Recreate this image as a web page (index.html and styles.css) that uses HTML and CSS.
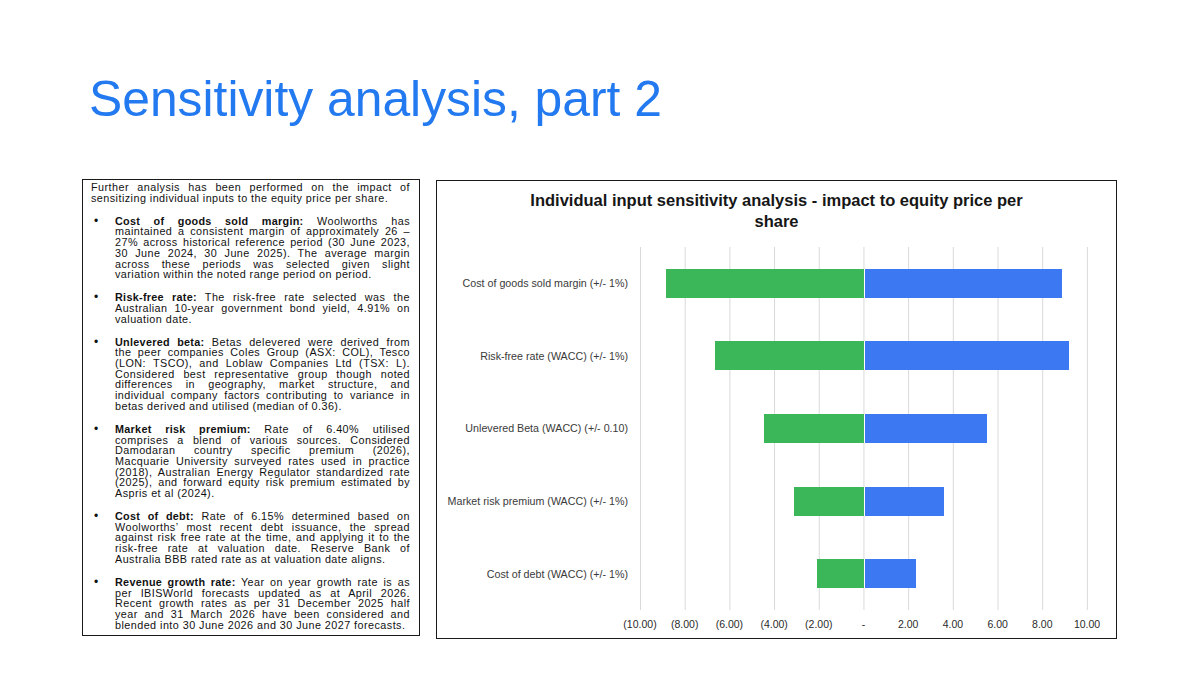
FILE: index.html
```html
<!DOCTYPE html>
<html lang="en">
<head>
<meta charset="utf-8">
<title>Sensitivity analysis, part 2</title>
<link rel="stylesheet" href="styles.css">
</head>
<body>
<div class="slide">
  <h1 class="title">Sensitivity analysis, part 2</h1>
  <div class="content">
    <div class="notes">
      <p class="para">
        <span class="ln j">Further analysis has been performed on the impact of</span>
        <span class="ln">sensitizing individual inputs to the equity price per share.</span>
      </p>
      <div class="item">
        <span class="dot">•</span>
        <p class="body">
          <span class="ln j"><b>Cost of goods sold margin:</b> Woolworths has</span>
          <span class="ln j">maintained a consistent margin of approximately 26 –</span>
          <span class="ln j">27% across historical reference period (30 June 2023,</span>
          <span class="ln j">30 June 2024, 30 June 2025). The average margin</span>
          <span class="ln j">across these periods was selected given slight</span>
          <span class="ln">variation within the noted range period on period.</span>
        </p>
      </div>
      <div class="item">
        <span class="dot">•</span>
        <p class="body">
          <span class="ln j"><b>Risk-free rate:</b> The risk-free rate selected was the</span>
          <span class="ln j">Australian 10-year government bond yield, 4.91% on</span>
          <span class="ln">valuation date.</span>
        </p>
      </div>
      <div class="item">
        <span class="dot">•</span>
        <p class="body">
          <span class="ln j"><b>Unlevered beta:</b> Betas delevered were derived from</span>
          <span class="ln j">the peer companies Coles Group (ASX: COL), Tesco</span>
          <span class="ln j">(LON: TSCO), and Loblaw Companies Ltd (TSX: L).</span>
          <span class="ln j">Considered best representative group though noted</span>
          <span class="ln j">differences in geography, market structure, and</span>
          <span class="ln j">individual company factors contributing to variance in</span>
          <span class="ln">betas derived and utilised (median of 0.36).</span>
        </p>
      </div>
      <div class="item">
        <span class="dot">•</span>
        <p class="body">
          <span class="ln j"><b>Market risk premium:</b> Rate of 6.40% utilised</span>
          <span class="ln j">comprises a blend of various sources. Considered</span>
          <span class="ln j">Damodaran country specific premium (2026),</span>
          <span class="ln j">Macquarie University surveyed rates used in practice</span>
          <span class="ln j">(2018), Australian Energy Regulator standardized rate</span>
          <span class="ln j">(2025), and forward equity risk premium estimated by</span>
          <span class="ln">Aspris et al (2024).</span>
        </p>
      </div>
      <div class="item">
        <span class="dot">•</span>
        <p class="body">
          <span class="ln j"><b>Cost of debt:</b> Rate of 6.15% determined based on</span>
          <span class="ln j">Woolworths’ most recent debt issuance, the spread</span>
          <span class="ln j">against risk free rate at the time, and applying it to the</span>
          <span class="ln j">risk-free rate at valuation date. Reserve Bank of</span>
          <span class="ln">Australia BBB rated rate as at valuation date aligns.</span>
        </p>
      </div>
      <div class="item">
        <span class="dot">•</span>
        <p class="body">
          <span class="ln j"><b>Revenue growth rate:</b> Year on year growth rate is as</span>
          <span class="ln j">per IBISWorld forecasts updated as at April 2026.</span>
          <span class="ln j">Recent growth rates as per 31 December 2025 half</span>
          <span class="ln j">year and 31 March 2026 have been considered and</span>
          <span class="ln">blended into 30 June 2026 and 30 June 2027 forecasts.</span>
        </p>
      </div>
    </div>

    <div class="chart">
      <div class="chart-title">Individual input sensitivity analysis - impact to equity price per share</div>
      <div class="chart-body">
        <div class="labels">
          <div class="label">Cost of goods sold margin (+/- 1%)</div>
          <div class="label">Risk-free rate (WACC) (+/- 1%)</div>
          <div class="label">Unlevered Beta (WACC) (+/- 0.10)</div>
          <div class="label">Market risk premium (WACC) (+/- 1%)</div>
          <div class="label">Cost of debt (WACC) (+/- 1%)</div>
        </div>
        <div class="plot">
          <div class="row"><div class="neg"><div class="bar green" style="width:88.6%"></div></div><div class="pos"><div class="bar blue" style="width:88.6%"></div></div></div>
          <div class="row"><div class="neg"><div class="bar green" style="width:66.7%"></div></div><div class="pos"><div class="bar blue" style="width:91.7%"></div></div></div>
          <div class="row"><div class="neg"><div class="bar green" style="width:44.7%"></div></div><div class="pos"><div class="bar blue" style="width:55.0%"></div></div></div>
          <div class="row"><div class="neg"><div class="bar green" style="width:31.3%"></div></div><div class="pos"><div class="bar blue" style="width:35.8%"></div></div></div>
          <div class="row"><div class="neg"><div class="bar green" style="width:21.0%"></div></div><div class="pos"><div class="bar blue" style="width:23.3%"></div></div></div>
        </div>
        <div class="axis-spacer"></div>
        <div class="axis">
          <span>(10.00)</span><span>(8.00)</span><span>(6.00)</span><span>(4.00)</span><span>(2.00)</span><span>-</span><span>2.00</span><span>4.00</span><span>6.00</span><span>8.00</span><span>10.00</span>
        </div>
      </div>
    </div>
  </div>
</div>
</body>
</html>
```

FILE: styles.css
```css
* { box-sizing: border-box; }

html, body {
  margin: 0;
  padding: 0;
  background: #ffffff;
}

body {
  width: 1200px;
  height: 675px;
  overflow: hidden;
  font-family: "Liberation Sans", Arial, sans-serif;
  color: #111;
}

.slide {
  padding: 75px 0 0 82px;
}

.title {
  margin: 0;
  padding-left: 7px;
  font-family: "Liberation Sans", Arial, sans-serif;
  font-weight: 400;
  font-size: 49.8px;
  line-height: 49.8px;
  height: 49.8px;
  color: #237af0;
  letter-spacing: 0;
}

.content {
  display: flex;
  align-items: flex-start;
  gap: 16px;
  margin-top: 54.2px;
}

/* Left notes box */
.notes {
  width: 338px;
  height: 457px;
  border: 1px solid #1a1a1a;
  padding: 2px 9px 0 8px;
  font-size: 10.8px;
  line-height: 10.7px;
  letter-spacing: 0.45px;
  color: #111;
}

.para, .body {
  margin: 0;
}

.para {
  margin-bottom: 12.3px;
}

.item {
  display: flex;
  margin-bottom: 12.3px;
}

.dot {
  flex: 0 0 24px;
  padding-left: 3px;
  font-size: 12px;
  line-height: 10.7px;
}

.body {
  flex: 1;
  min-width: 0;
}

.ln {
  display: block;
  text-align: left;
  white-space: nowrap;
}

.ln.j {
  white-space: normal;
  text-align: justify;
  text-align-last: justify;
}

.ln b {
  font-weight: 700;
  letter-spacing: 0.3px;
}

/* Chart box */
.chart {
  width: 681px;
  height: 459px;
  margin-top: 1px;
  border: 1px solid #1a1a1a;
  padding-top: 9px;
}

.chart-title {
  max-width: 520px;
  margin: 0 auto;
  text-align: center;
  font-weight: 700;
  font-size: 16.5px;
  line-height: 21px;
  color: #161616;
}

.chart-body {
  display: grid;
  grid-template-columns: 191px 448px;
  column-gap: 12px;
  margin-top: 15px;
}

.labels {
  display: flex;
  flex-direction: column;
}

.label {
  height: 72.6px;
  display: flex;
  align-items: center;
  justify-content: flex-end;
  font-size: 10.7px;
  color: #3a3a3a;
  white-space: nowrap;
}

.plot {
  height: 363px;
  display: flex;
  flex-direction: column;
  background-image: linear-gradient(to right, #d9d9d9 0, #d9d9d9 1px, transparent 1px);
  background-size: 44.7px 100%;
  background-repeat: repeat-x;
}

.row {
  height: 72.6px;
  display: flex;
  align-items: center;
}

.neg, .pos {
  width: 224px;
  height: 29px;
  display: flex;
}

.neg {
  justify-content: flex-end;
}

.pos {
  justify-content: flex-start;
}

.bar {
  height: 29px;
}

.green {
  background: #3bb75a;
}

.blue {
  background: #3c78f2;
  border-left: 1px solid #ffffff;
}

.axis {
  display: flex;
  width: 491.7px;
  margin-left: -22.35px;
  margin-top: 7px;
}

.axis span {
  flex: 1 1 0;
  text-align: center;
  font-size: 10.5px;
  line-height: 14px;
  color: #2a2a2a;
  white-space: nowrap;
}
```
